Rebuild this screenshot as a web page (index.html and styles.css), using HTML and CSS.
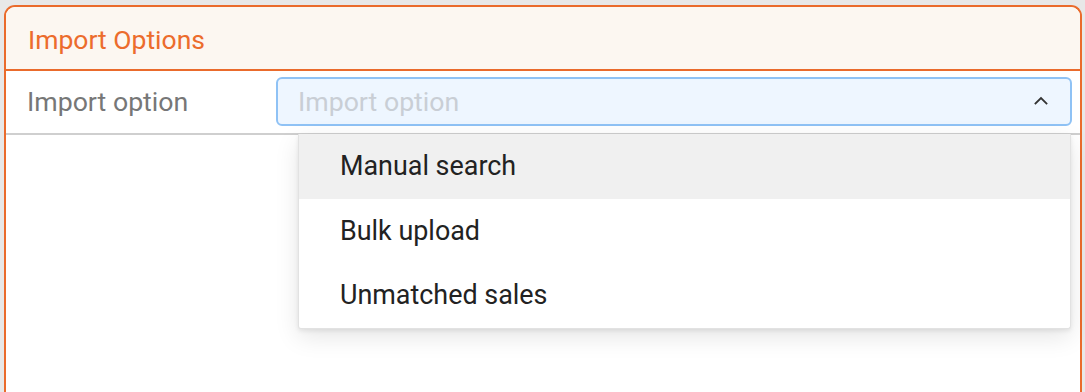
FILE: index.html
```html
<!DOCTYPE html>
<html lang="en">
<head>
<meta charset="utf-8">
<title>Import Options</title>
<link rel="stylesheet" href="styles.css">
</head>
<body>
  <section class="card">
    <header class="card-header">
      <h2 class="card-title">Import Options</h2>
    </header>
    <div class="form-row">
      <label class="form-label">Import option</label>
      <div class="select-wrap">
        <div class="select">
          <span class="select-placeholder">Import option</span>
          <svg class="chevron" width="14" height="9" viewBox="0 0 14 9" aria-hidden="true">
            <path d="M1.5 7.5 L7 2 L12.5 7.5" fill="none" stroke="#333" stroke-width="1.8" stroke-linecap="square"/>
          </svg>
        </div>
        <ul class="menu">
          <li class="menu-item is-active">Manual search</li>
          <li class="menu-item">Bulk upload</li>
          <li class="menu-item">Unmatched sales</li>
        </ul>
      </div>
    </div>
  </section>
</body>
</html>
```
FILE: styles.css
```css
* { box-sizing: border-box; }
html, body { margin: 0; padding: 0; }
body {
  background: #e8e8e8;
  font-family: Roboto, "Liberation Sans", Arial, sans-serif;
  padding: 5px 3px 0 4px;
  overflow: hidden;
  height: 392px;
}
.card {
  border: 2px solid #ea6b2c;
  border-bottom: 0;
  border-radius: 11px 11px 0 0;
  background: #fff;
  height: 387px;
}
.card-header {
  background: #fcf7f1;
  border-bottom: 2px solid #ea6b2c;
  height: 64px;
  padding: 0 22px;
  display: flex;
  align-items: center;
  border-radius: 9px 9px 0 0;
}
.card-title {
  margin: 0;
  font-weight: 400;
  font-size: 26.5px;
  color: #ec6c2c;
  padding-top: 2px;
}
.form-row {
  display: grid;
  grid-template-columns: 249px 1fr;
  align-items: center;
  padding: 6px 8px 7px 21px;
  border-bottom: 2px solid #cfcfcf;
}
.form-label {
  font-size: 26.7px;
  color: #777;
}
.select-wrap { position: relative; }
.select {
  height: 49px;
  border: 2px solid #8fc2f5;
  border-radius: 6px;
  background: #eef6ff;
  display: flex;
  align-items: center;
  justify-content: space-between;
  padding: 0 22px 0 20px;
}
.select-placeholder {
  font-size: 26.7px;
  color: #c9ced5;
}
.chevron { display: block; margin-top: -2px; }
.menu {
  position: absolute;
  top: 57px;
  left: 22px;
  right: 1px;
  margin: 0;
  padding: 0;
  list-style: none;
  background: #fff;
  border: 1px solid #e2e2e2;
  border-top: 0;
  border-radius: 0 0 3px 3px;
  box-shadow: 0 8px 24px rgba(0,0,0,0.10), 0 2px 4px rgba(0,0,0,0.08);
  z-index: 10;
}
.menu-item {
  height: 64.5px;
  display: flex;
  align-items: center;
  padding-left: 41px;
  font-size: 26.9px;
  color: #222;
}
.menu-item.is-active { background: #f0f0f0; }
```
